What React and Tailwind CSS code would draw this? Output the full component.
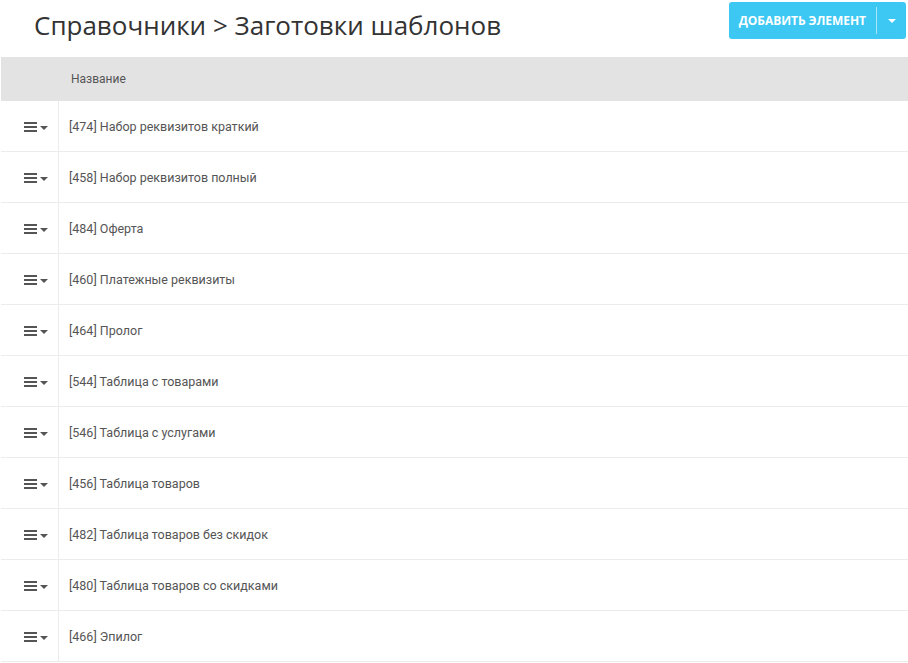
const rows = [
  '[474] Набор реквизитов краткий',
  '[458] Набор реквизитов полный',
  '[484] Оферта',
  '[460] Платежные реквизиты',
  '[464] Пролог',
  '[544] Таблица с товарами',
  '[546] Таблица с услугами',
  '[456] Таблица товаров',
  '[482] Таблица товаров без скидок',
  '[480] Таблица товаров со скидками',
  '[466] Эпилог',
];

const MenuIcon = () => (
  <div className="flex items-center gap-[3px]">
    <svg width="13" height="12" viewBox="0 0 13 12">
      <rect x="0" y="1" width="13" height="2" fill="#555" />
      <rect x="0" y="5" width="13" height="2" fill="#555" />
      <rect x="0" y="9" width="13" height="2" fill="#555" />
    </svg>
    <svg width="8" height="4" viewBox="0 0 8 4" className="mt-[2px]">
      <path d="M0 0 L8 0 L4 4 Z" fill="#555" />
    </svg>
  </div>
);

export default function App() {
  return (
    <div className="w-[908px] h-[663px] bg-white overflow-hidden font-['Roboto','Liberation_Sans',sans-serif]">
      <div className="h-[57px] flex items-start justify-between">
        <h1 className="pl-[34px] pt-[7px] text-[26px] leading-[36px] text-[#333] font-['Open_Sans',sans-serif]">
          Справочники &gt; Заготовки шаблонов
        </h1>
        <div className="mt-[2px] mr-[2px] h-[37px] flex items-center bg-[#3dc8f4] rounded-[3px] text-white font-['Open_Sans',sans-serif]">
          <span className="pl-[10px] pr-[10px] text-[12px] font-bold uppercase tracking-[-0.05px]">Добавить элемент</span>
          <span className="w-px h-[27px] bg-[#a9e6fa]" />
          <span className="w-[29px] flex justify-center">
            <svg width="8" height="4" viewBox="0 0 8 4">
              <path d="M0 0 L8 0 L4 4 Z" fill="#fff" />
            </svg>
          </span>
        </div>
      </div>
      <div className="ml-px">
        <div className="h-[44px] bg-[#e3e3e3] flex items-center">
          <div className="w-[58px]" />
          <div className="pl-[12px] text-[12px] text-[#555]">Название</div>
        </div>
        {rows.map((r) => (
          <div key={r} className="h-[51px] flex border-b border-[#ececec]">
            <div className="w-[58px] border-r border-[#ececec] flex items-center pl-[23px] pt-px">
              <MenuIcon />
            </div>
            <div className="flex items-center pl-[10px] text-[12.5px] text-[#555] pt-[3px]">{r}</div>
          </div>
        ))}
      </div>
    </div>
  );
}
